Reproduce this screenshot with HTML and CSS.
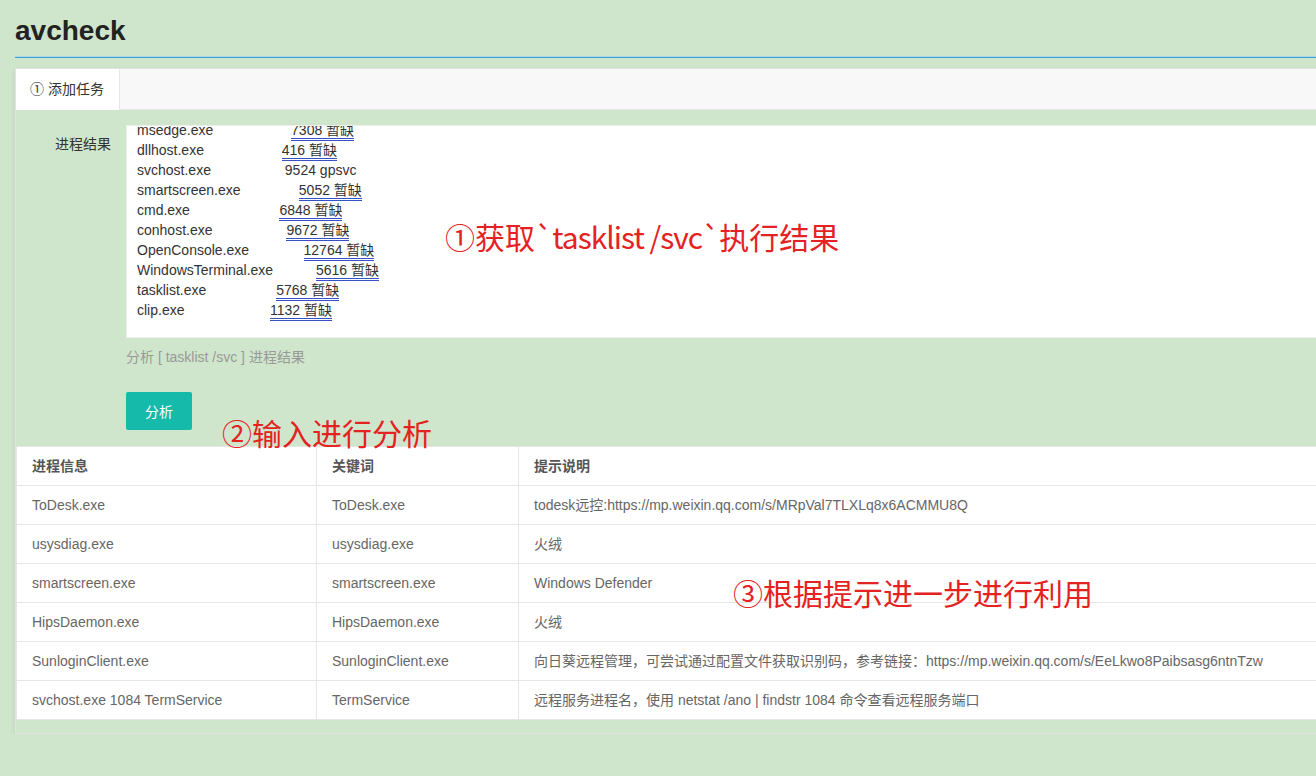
FILE: index.html
```html
<!DOCTYPE html>
<html lang="zh-CN">
<head>
<meta charset="utf-8">
<title>avcheck</title>
<link rel="stylesheet" href="styles.css">
</head>
<body>
<div class="page">
  <h1 class="title">avcheck</h1>
  <div class="card">
    <ul class="tab-title">
      <li class="tab active">① 添加任务</li>
    </ul>
    <div class="tab-content">
      <div class="form-item">
        <label class="form-label">进程结果</label>
        <div class="input-block">
          <div class="textarea">
            <div class="lines">
              <div class="line">msedge.exe                    <span class="ul">7308 暂缺</span></div>
              <div class="line">dllhost.exe                    <span class="ul">416 暂缺</span></div>
              <div class="line">svchost.exe                   9524 gpsvc</div>
              <div class="line">smartscreen.exe               <span class="ul">5052 暂缺</span></div>
              <div class="line">cmd.exe                       <span class="ul">6848 暂缺</span></div>
              <div class="line">conhost.exe                   <span class="ul">9672 暂缺</span></div>
              <div class="line">OpenConsole.exe              <span class="ul">12764 暂缺</span></div>
              <div class="line">WindowsTerminal.exe           <span class="ul">5616 暂缺</span></div>
              <div class="line">tasklist.exe                  <span class="ul">5768 暂缺</span></div>
              <div class="line">clip.exe                      <span class="ul">1132 暂缺</span></div>
            </div>
          </div>
          <div class="aux">分析 [ tasklist /svc ] 进程结果</div>
        </div>
      </div>
      <div class="form-item btn-row">
        <button class="btn" type="button">分析</button>
      </div>
      <table class="table">
        <thead>
          <tr><th class="c1">进程信息</th><th class="c2">关键词</th><th>提示说明</th></tr>
        </thead>
        <tbody>
          <tr><td>ToDesk.exe</td><td>ToDesk.exe</td><td>todesk远控:https://mp.weixin.qq.com/s/MRpVal7TLXLq8x6ACMMU8Q</td></tr>
          <tr><td>usysdiag.exe</td><td>usysdiag.exe</td><td>火绒</td></tr>
          <tr><td>smartscreen.exe</td><td>smartscreen.exe</td><td>Windows Defender</td></tr>
          <tr><td>HipsDaemon.exe</td><td>HipsDaemon.exe</td><td>火绒</td></tr>
          <tr><td>SunloginClient.exe</td><td>SunloginClient.exe</td><td>向日葵远程管理，可尝试通过配置文件获取识别码，参考链接：https://mp.weixin.qq.com/s/EeLkwo8Paibsasg6ntnTzw</td></tr>
          <tr><td>svchost.exe 1084 TermService</td><td>TermService</td><td>远程服务进程名，使用 netstat /ano | findstr 1084 命令查看远程服务端口</td></tr>
        </tbody>
      </table>
    </div>
  </div>
  <div class="note note1">①获取<span class="tight">`tasklist /svc`</span>执行结果</div>
  <div class="note note2">②输入进行分析</div>
  <div class="note note3">③根据提示进一步进行利用</div>
</div>
</body>
</html>
```
FILE: styles.css
```css
html, body {
  margin: 0;
  padding: 0;
  overflow: hidden;
  background: #cfe6cc;
}
body {
  font-family: "Liberation Sans", Arial, "Noto Sans CJK SC", sans-serif;
  font-size: 14px;
  color: #333;
}
.page {
  position: relative;
  padding: 0 0 0 15px;
  width: 1340px;
}
.title {
  margin: 0;
  padding: 15px 0 10px;
  font-size: 28px;
  line-height: 32px;
  font-weight: 700;
  color: #222;
  border-bottom: 1px solid #3aa3d4;
  box-shadow: 0 -1px 0 #a8dbe8 inset;
}
.card {
  margin-top: 10px;
  border: 1px solid #e2e2e2;
  box-shadow: 0 2px 5px 0 rgba(0,0,0,0.1);
}
.tab-title {
  list-style: none;
  margin: 0;
  padding: 0;
  height: 40px;
  background: #f8f8f8;
  border-bottom: 1px solid #e6e6e6;
  display: flex;
}
.tab {
  padding: 0 15px 0 14px;
  white-space: nowrap;
  line-height: 40px;
  height: 41px;
  background: #fff;
  border-right: 1px solid #e6e6e6;
  color: #333;
  font-size: 14px;
}
.tab-content {
  padding: 15px 0 13px;
}
.form-item {
  display: flex;
}
.form-label {
  width: 80px;
  padding: 9px 15px;
  line-height: 20px;
  text-align: right;
  flex: none;
}
.input-block {
  flex: 1;
  min-width: 0;
}
.textarea {
  height: 211px;
  background: #fff;
  border: 1px solid #eeeeee;
  padding: 0 10px;
  overflow: hidden;
  color: #333;
}
.lines {
  margin-top: -6px;
}
.line {
  white-space: pre;
  line-height: 20px;
  height: 20px;
}
.ul {
  border-bottom: 3px double #3550c8;
}
.aux {
  padding: 9px 0;
  line-height: 20px;
  color: #999;
}
.btn-row {
  padding: 16px 0 16px 110px;
}
.btn {
  height: 38px;
  width: 66px;
  border: none;
  border-radius: 2px;
  background: #16baaa;
  color: #fff;
  font-family: "Liberation Sans", Arial, "Noto Sans CJK SC", sans-serif;
  font-size: 14px;
  padding: 0;
}
.table {
  width: 100%;
  border-collapse: collapse;
  background: #fff;
  color: #666;
}
.table th, .table td {
  border: 1px solid #e6e6e6;
  padding: 9px 15px;
  line-height: 20px;
  text-align: left;
  font-size: 14px;
  white-space: nowrap;
}
.table th {
  font-weight: 700;
  color: #555;
}
.table .c1 { width: 269px; }
.table .c2 { width: 171px; }
.note {
  position: absolute;
  font-family: "Noto Sans CJK SC", sans-serif;
  font-size: 30px;
  line-height: 34px;
  color: #e52222;
  white-space: nowrap;
}
.tight {
  letter-spacing: -1px;
}
.note1 { left: 445px; top: 219px; }
.note2 { left: 222px; top: 415px; }
.note3 { left: 733px; top: 575px; }
```
